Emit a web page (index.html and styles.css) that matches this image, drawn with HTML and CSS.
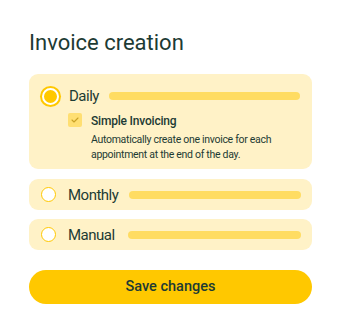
FILE: index.html
```html
<!DOCTYPE html>
<html lang="en">
  <head>
    <meta charset="UTF-8" />
    <title>Invoice creation</title>
    <link rel="stylesheet" href="styles.css">
  </head>
  <body>
    <div class="panel">
      <h1>Invoice creation</h1>
      <div class="option active">
        <div class="option-row">
          <span class="radio checked"></span>
          <span class="label">Daily</span>
          <span class="bar"></span>
        </div>
        <div class="sub">
          <span class="checkbox">
            <svg width="8" height="6" viewBox="0 0 8 6">
              <path d="M1 3l2 2 4-4" fill="none" stroke="#c9a227" stroke-width="1.1" stroke-linecap="round" stroke-linejoin="round" />
            </svg>
          </span>
          <div class="sub-text">
            <div class="sub-title">Simple Invoicing</div>
            <p>Automatically create one invoice for each<br />appointment at the end of the day.</p>
          </div>
        </div>
      </div>
      <div class="option">
        <div class="option-row">
          <span class="radio"></span>
          <span class="label">Monthly</span>
          <span class="bar"></span>
        </div>
      </div>
      <div class="option">
        <div class="option-row">
          <span class="radio"></span>
          <span class="label">Manual</span>
          <span class="bar"></span>
        </div>
      </div>
      <button class="save">Save changes</button>
    </div>
  </body>
</html>
```
FILE: styles.css
```css
body {
  margin: 0;
  background: #ffffff;
  font-family: Roboto, "Noto Sans", sans-serif;
  color: #1d3b34;
}
.panel {
  padding: 28px 29px 0;
  display: flex;
  flex-direction: column;
}
h1 {
  font-size: 22px;
  font-weight: 400;
  line-height: 30px;
  margin: 0 0 16px;
}
.option {
  background: #fff2c7;
  border-radius: 9px;
  padding: 7px 11px 6px 12px;
  margin-bottom: 9px;
}
.option.active {
  padding: 13px 12px 7px 13px;
  margin-bottom: 10px;
}
.option-row {
  display: flex;
  align-items: center;
  gap: 11px;
  height: 18px;
}
.option.active .option-row {
  gap: 10px;
}
.radio {
  width: 13px;
  height: 13px;
  border: 1.5px solid #ffc800;
  border-radius: 50%;
  background: #ffffff;
  flex: none;
  margin-right: 1px;
}
.radio.checked {
  border: 2px solid #ffffff;
  background: #ffc800;
  box-shadow: 0 0 0 2px #ffc800;
  margin: 0;
}
.label {
  font-size: 15px;
  letter-spacing: -0.5px;
  flex: none;
  min-width: 49px;
}
.option.active .label {
  min-width: 0;
}
.bar {
  flex: 1;
  height: 8px;
  border-radius: 4px;
  background: #ffdc62;
}
.sub {
  display: flex;
  gap: 9px;
  margin: 8px 0 0 26px;
}
.checkbox {
  width: 14px;
  height: 14px;
  border-radius: 2px;
  background: #ffdf72;
  display: flex;
  align-items: center;
  justify-content: center;
  flex: none;
}
.sub-title {
  font-size: 12px;
  font-weight: 500;
  letter-spacing: -0.2px;
  line-height: 16px;
}
.sub-text p {
  margin: 2.5px 0 0;
  font-size: 10.5px;
  letter-spacing: -0.3px;
  line-height: 15px;
}
.save {
  margin-top: 11px;
  height: 34px;
  border: none;
  border-radius: 17px;
  background: #ffc800;
  color: #1d3b34;
  font-family: Roboto, "Noto Sans", sans-serif;
  font-size: 14.5px;
  font-weight: 500;
}
```
